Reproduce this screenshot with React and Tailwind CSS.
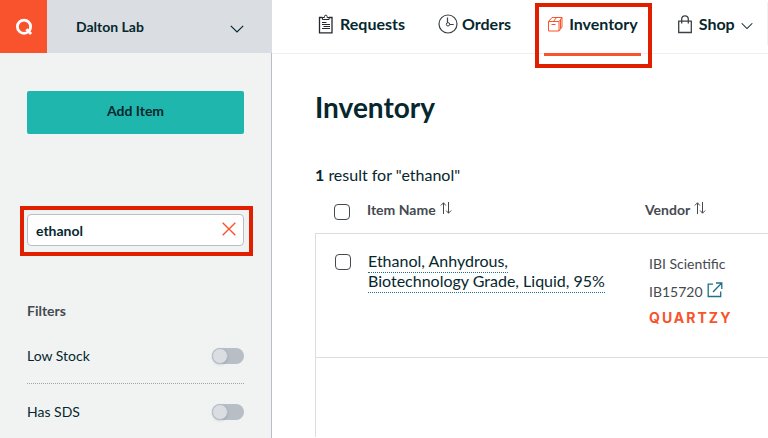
import { useState } from "react"

const filters = [
  { id: "low-stock", label: "Low Stock" },
  { id: "has-sds", label: "Has SDS" },
]

function Chevron({ className }) {
  return (
    <svg className={className} viewBox="0 0 14 8" fill="none" stroke="currentColor" strokeWidth="1.2">
      <path d="M.8.8 7 7 13.2.8" />
    </svg>
  )
}

function ClipboardIcon() {
  return (
    <svg className="h-5 w-4 shrink-0" viewBox="0 0 16 20" fill="none" stroke="#25292e">
      <path d="M4.500 3.500h-3v15.300h12.500V3.500h-3" strokeWidth="1.300" />
      <path d="M4.500 5.500v-2h2v-1a1.300 1.300 0 0 1 2.600 0v1h2v2z" />
      <path d="M4 8.500h4.500M4 10.500h8M5.500 12.500H12M4 14.500h8" />
    </svg>
  )
}

function ClockIcon() {
  return (
    <svg className="h-5 w-5 shrink-0" viewBox="0 0 20 20" fill="none" stroke="#3c4048">
      <circle cx="10" cy="10" r="9" strokeWidth="1.200" />
      <circle cx="10" cy="10.300" r="1.700" />
      <path d="M9.500 3.500v5.200M11.700 10.500h4" strokeWidth="1.200" />
    </svg>
  )
}

function BoxIcon() {
  return (
    <svg className="h-4 w-4 shrink-0" viewBox="0 0 16 16" fill="none" stroke="#f9532d">
      <path d="M1.500 5.500H12v9.500H1.500zM1.500 5.500l3.500-4h10l-3 4M15 1.500V11l-3 4M13.500 3.500v9" />
      <path d="M4.500 8.500h4M6.500 5.500l3-4" />
    </svg>
  )
}

function BagIcon() {
  return (
    <svg className="h-5 w-4 shrink-0" viewBox="0 0 16 20" fill="none" stroke="#3c4048" strokeWidth="1.300">
      <path d="M1.700 7.200h12.600v11.300H1.700z" />
      <path d="M4.700 9.500V5.200a3.300 3.300 0 0 1 6.600 0v4.300" />
    </svg>
  )
}

function SortIcon() {
  return (
    <svg className="mb-1 h-3 w-3" viewBox="0 0 12 12" fill="none" stroke="#454a51">
      <path d="M3.500 12V.800M.800 3.500 3.500.800l2.300 2.700M8.500 0v11.200M6.200 8.500l2.300 2.700 2.700-2.700" />
    </svg>
  )
}

function ExternalIcon() {
  return (
    <svg className="h-4 w-4" viewBox="0 0 16 16" fill="none" stroke="#1d6f8a" strokeWidth="1.300">
      <path d="M6 2.200H1.200v12.300h12.500V9.500M9 1h5.800v6M14.500 1.300 6 10" />
    </svg>
  )
}

function Checkbox({ label }) {
  return (
    <input
      type="checkbox"
      aria-label={label}
      className="block h-4 w-4 appearance-none rounded-sm border border-[#454a51] bg-white checked:bg-[#454a51]"
    />
  )
}

function Sidebar() {
  const [query, setQuery] = useState("ethanol")

  return (
    <aside className="flex w-[272px] shrink-0 flex-col">

      <div className="flex h-[53px] bg-[#dadde2]">
        <a href="#home" aria-label="Home" className="flex w-[47px] items-center justify-center bg-[#f9532d]">
          <svg className="h-[18px] w-[18px]" viewBox="0 0 18 18" fill="none" stroke="#fff" strokeWidth="2.800">
            <circle cx="9" cy="8.700" r="6.600" />
            <path d="m11.300 11.300 4.800 4.800" />
          </svg>
        </a>
        <button className="flex flex-1 items-center justify-between pr-7 pl-[29px] text-sm font-bold">
          Dalton Lab
          <Chevron className="mt-1 h-2 w-[14px]" />
        </button>
      </div>

      <div className="flex-1 border-r border-[#b9bec6] bg-[#f1f3f3] pt-[38px] pr-[27px] pl-[27px]">
        <button className="h-[43px] w-full rounded-xs bg-[#1fb7ad] pb-1 text-sm font-bold">
          Add Item
        </button>

        <div className="relative mt-20 h-8">
          <input
            type="text"
            aria-label="Search inventory"
            value={query}
            onChange={(e) => setQuery(e.target.value)}
            className="block h-8 w-full rounded-sm border border-[#b9bec6] bg-white pr-8 pl-2 text-sm font-bold"
          />
          <button aria-label="Clear search" onClick={() => setQuery("")} className="absolute top-2 right-2">
            <svg className="h-[14px] w-[14px]" viewBox="0 0 14 14" stroke="#f9532d" strokeWidth="1.400">
              <path d="m.700.700 12.600 12.600M13.300.700.700 13.300" />
            </svg>
          </button>
          <div className="pointer-events-none absolute -top-2 -right-[9px] -bottom-[10px] -left-[7px] border-4 border-[#df1f00]" />
        </div>

        <h2 className="mt-[55px] mb-2 text-sm font-bold text-[#454a51]">Filters</h2>

        <div className="divide-y divide-dotted divide-[#9fa5ab]">
          {filters.map((f) => (
            <div key={f.id} className="flex h-[55px] items-center justify-between text-sm">
              <label htmlFor={f.id}>{f.label}</label>
              <input
                id={f.id}
                type="checkbox"
                role="switch"
                className="h-4 w-8 appearance-none rounded-full bg-[#b7bec6] before:block before:h-4 before:w-4 before:rounded-full before:border before:border-[#b7bec6] before:bg-[#dadde2] before:shadow before:content-[''] checked:before:ml-4"
              />
            </div>
          ))}
        </div>
      </div>
    </aside>
  )
}

function TopNav() {
  return (
    <nav className="flex h-[54px] shrink-0 border-b border-[#eceeef] pl-[46px] font-bold whitespace-nowrap">
      <a href="#requests" className="flex items-center gap-[6px] pb-[5px]">
        <ClipboardIcon /> Requests
      </a>
      <a href="#orders" className="ml-[33px] flex items-center gap-1 pb-[5px]">
        <ClockIcon /> Orders
      </a>
      <a href="#inventory" aria-current="page" className="relative ml-[33px] flex items-center gap-[6px] px-[3px] pb-[5px]">
        <BoxIcon /> Inventory
        <span className="absolute inset-x-0 -bottom-[3px] h-[3px] bg-[#f9532d]" />
        <span className="absolute top-[3px] -right-[11px] -bottom-[15px] -left-[9px] border-4 border-[#df1f00]" />
      </a>
      <button className="ml-9 flex items-center gap-[6px] pb-[5px]">
        <BagIcon /> Shop
        <Chevron className="mt-1 h-2 w-3" />
      </button>
      <div className="mt-[2px] ml-auto h-[43px] border-r border-[#f1f3f3]" />
    </nav>
  )
}

function SortHeader({ children }) {
  return (
    <button className="flex items-center gap-1 font-bold">
      {children} <SortIcon />
    </button>
  )
}

function InventoryTable() {
  return (
    <table className="w-full table-fixed border-separate border-spacing-0 text-left text-sm text-[#454a51]">
      <thead>
        <tr className="h-[47px]">
          <th className="w-[52px] pt-1 pl-[19px]">
            <Checkbox label="Select all items" />
          </th>
          <th className="w-[278px]"><SortHeader>Item Name</SortHeader></th>
          <th><SortHeader>Vendor</SortHeader></th>
        </tr>
      </thead>
      <tbody className="[&_td]:border-t [&_td]:border-[#dadde2] [&_td:first-child]:border-l">
        <tr className="h-[124px] align-top">
          <td className="pt-5 pl-[19px]">
            <Checkbox label="Select Ethanol, Anhydrous" />
          </td>
          <td className="pt-[17px] pr-9 pl-px text-base leading-5">
            <a href="#ethanol" className="border-b border-dotted border-[#1d6f8a] pb-[2px] text-[#06272e]">
              Ethanol, Anhydrous,<br />Biotechnology Grade, Liquid, 95%
            </a>
          </td>
          <td className="pt-4 pl-1 leading-7">
            <div>IBI Scientific</div>
            <div className="flex items-center gap-1">
              IB15720
              <a href="#ib15720" aria-label="Open vendor page" className="pb-1"><ExternalIcon /></a>
            </div>
            <div className="font-['Inter',sans-serif] text-sm leading-6 font-bold tracking-[2px] text-[#f9532d]">QUARTZY</div>
          </td>
        </tr>
        <tr className="h-20">
          <td colSpan={3} />
        </tr>
      </tbody>
    </table>
  )
}

function App() {
  return (
    <div className="flex min-h-screen bg-white font-['Lato',sans-serif] text-[#06272e]">
      <Sidebar />
      <div className="flex min-w-0 flex-1 flex-col">
        <TopNav />
        <main className="pt-[35px] pl-[43px]">
          <h1 className="text-[28px] leading-9 font-bold">Inventory</h1>
          <p className="mt-10 mb-px leading-5"><b>1</b> result for "ethanol"</p>
          <InventoryTable />
        </main>
      </div>
    </div>
  )
}

export default App
